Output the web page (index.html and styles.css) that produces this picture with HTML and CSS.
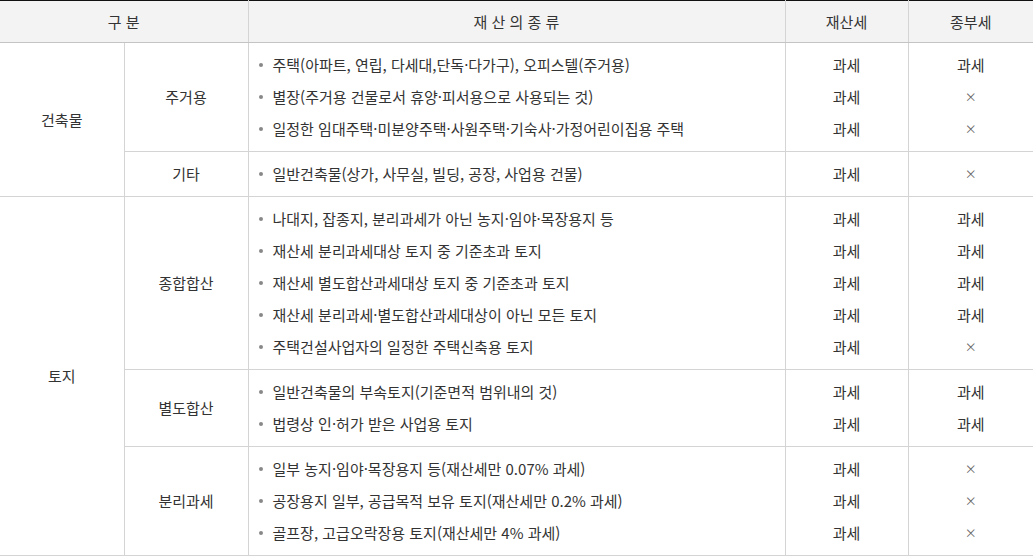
FILE: index.html
```html
<!DOCTYPE html>
<html lang="ko">
<head>
<meta charset="utf-8">
<link rel="stylesheet" href="styles.css">
</head>
<body>
<table class="tax">
  <colgroup>
    <col class="c1"><col class="c2"><col class="c3"><col class="c4"><col class="c5">
  </colgroup>
  <thead>
    <tr>
      <th colspan="2">구 분</th>
      <th>재 산 의 종 류</th>
      <th>재산세</th>
      <th>종부세</th>
    </tr>
  </thead>
  <tbody>
    <tr>
      <td rowspan="2">건축물</td>
      <td>주거용</td>
      <td class="items"><ul>
        <li>주택(아파트, 연립, 다세대,단독·다가구), 오피스텔(주거용)</li>
        <li>별장(주거용 건물로서 휴양·피서용으로 사용되는 것)</li>
        <li>일정한 임대주택·미분양주택·사원주택·기숙사·가정어린이집용 주택</li>
      </ul></td>
      <td class="vals"><div>과세</div><div>과세</div><div>과세</div></td>
      <td class="vals"><div>과세</div><div class="x">×</div><div class="x">×</div></td>
    </tr>
    <tr>
      <td>기타</td>
      <td class="items"><ul>
        <li>일반건축물(상가, 사무실, 빌딩, 공장, 사업용 건물)</li>
      </ul></td>
      <td class="vals"><div>과세</div></td>
      <td class="vals"><div class="x">×</div></td>
    </tr>
    <tr>
      <td rowspan="3">토지</td>
      <td>종합합산</td>
      <td class="items"><ul>
        <li>나대지, 잡종지, 분리과세가 아닌 농지·임야·목장용지 등</li>
        <li>재산세 분리과세대상 토지 중 기준초과 토지</li>
        <li>재산세 별도합산과세대상 토지 중 기준초과 토지</li>
        <li>재산세 분리과세·별도합산과세대상이 아닌 모든 토지</li>
        <li>주택건설사업자의 일정한 주택신축용 토지</li>
      </ul></td>
      <td class="vals"><div>과세</div><div>과세</div><div>과세</div><div>과세</div><div>과세</div></td>
      <td class="vals"><div>과세</div><div>과세</div><div>과세</div><div>과세</div><div class="x">×</div></td>
    </tr>
    <tr>
      <td>별도합산</td>
      <td class="items"><ul>
        <li>일반건축물의 부속토지(기준면적 범위내의 것)</li>
        <li>법령상 인·허가 받은 사업용 토지</li>
      </ul></td>
      <td class="vals"><div>과세</div><div>과세</div></td>
      <td class="vals"><div>과세</div><div>과세</div></td>
    </tr>
    <tr>
      <td>분리과세</td>
      <td class="items"><ul>
        <li>일부 농지·임야·목장용지 등(재산세만 0.07% 과세)</li>
        <li>공장용지 일부, 공급목적 보유 토지(재산세만 0.2% 과세)</li>
        <li>골프장, 고급오락장용 토지(재산세만 4% 과세)</li>
      </ul></td>
      <td class="vals"><div>과세</div><div>과세</div><div>과세</div></td>
      <td class="vals"><div class="x">×</div><div class="x">×</div><div class="x">×</div></td>
    </tr>
  </tbody>
</table>
</body>
</html>
```

FILE: styles.css
```css
html, body {
  margin: 0;
  padding: 0;
  background: #fff;
}

body {
  font-family: "Noto Sans CJK KR", "Noto Sans", sans-serif;
  font-size: 15px;
  color: #333;
}

.tax {
  width: 1033px;
  border-collapse: collapse;
  table-layout: fixed;
  border-top: 1px solid #111;
  border-bottom: 1px solid #d2d2d2;
}

.c1 { width: 124px; }
.c2 { width: 124px; }
.c3 { width: 537px; }
.c4 { width: 123px; }
.c5 { width: 125px; }

.tax th {
  height: 41px;
  padding: 0;
  background: #f3f3f3;
  font-weight: normal;
  font-size: 15px;
  color: #333;
  border-bottom: 1px solid #c4c4c4;
  border-left: 1px solid #d4d4d4;
  text-align: center;
  vertical-align: middle;
}

.tax td {
  padding: 6px 0;
  border: 1px solid #d4d4d4;
  text-align: center;
  vertical-align: middle;
  line-height: 32px;
}

.tax th:first-child,
.tax tbody tr:nth-child(1) td:first-child,
.tax tbody tr:nth-child(3) td:first-child {
  border-left: none;
}

.tax th:last-child,
.tax td.vals:last-child {
  border-right: none;
}

.tax td.items {
  text-align: left;
}

.items ul {
  margin: 0;
  padding: 0;
  list-style: none;
}

.items li {
  position: relative;
  height: 32px;
  line-height: 31px;
  padding-left: 24px;
  white-space: nowrap;
}

.items li::before {
  content: "";
  position: absolute;
  left: 10px;
  top: 14px;
  width: 4px;
  height: 4px;
  border-radius: 50%;
  background: #888;
}

.vals div {
  height: 32px;
  line-height: 31px;
}

.vals .x {
  font-size: 12px;
  color: #666;
}
```
